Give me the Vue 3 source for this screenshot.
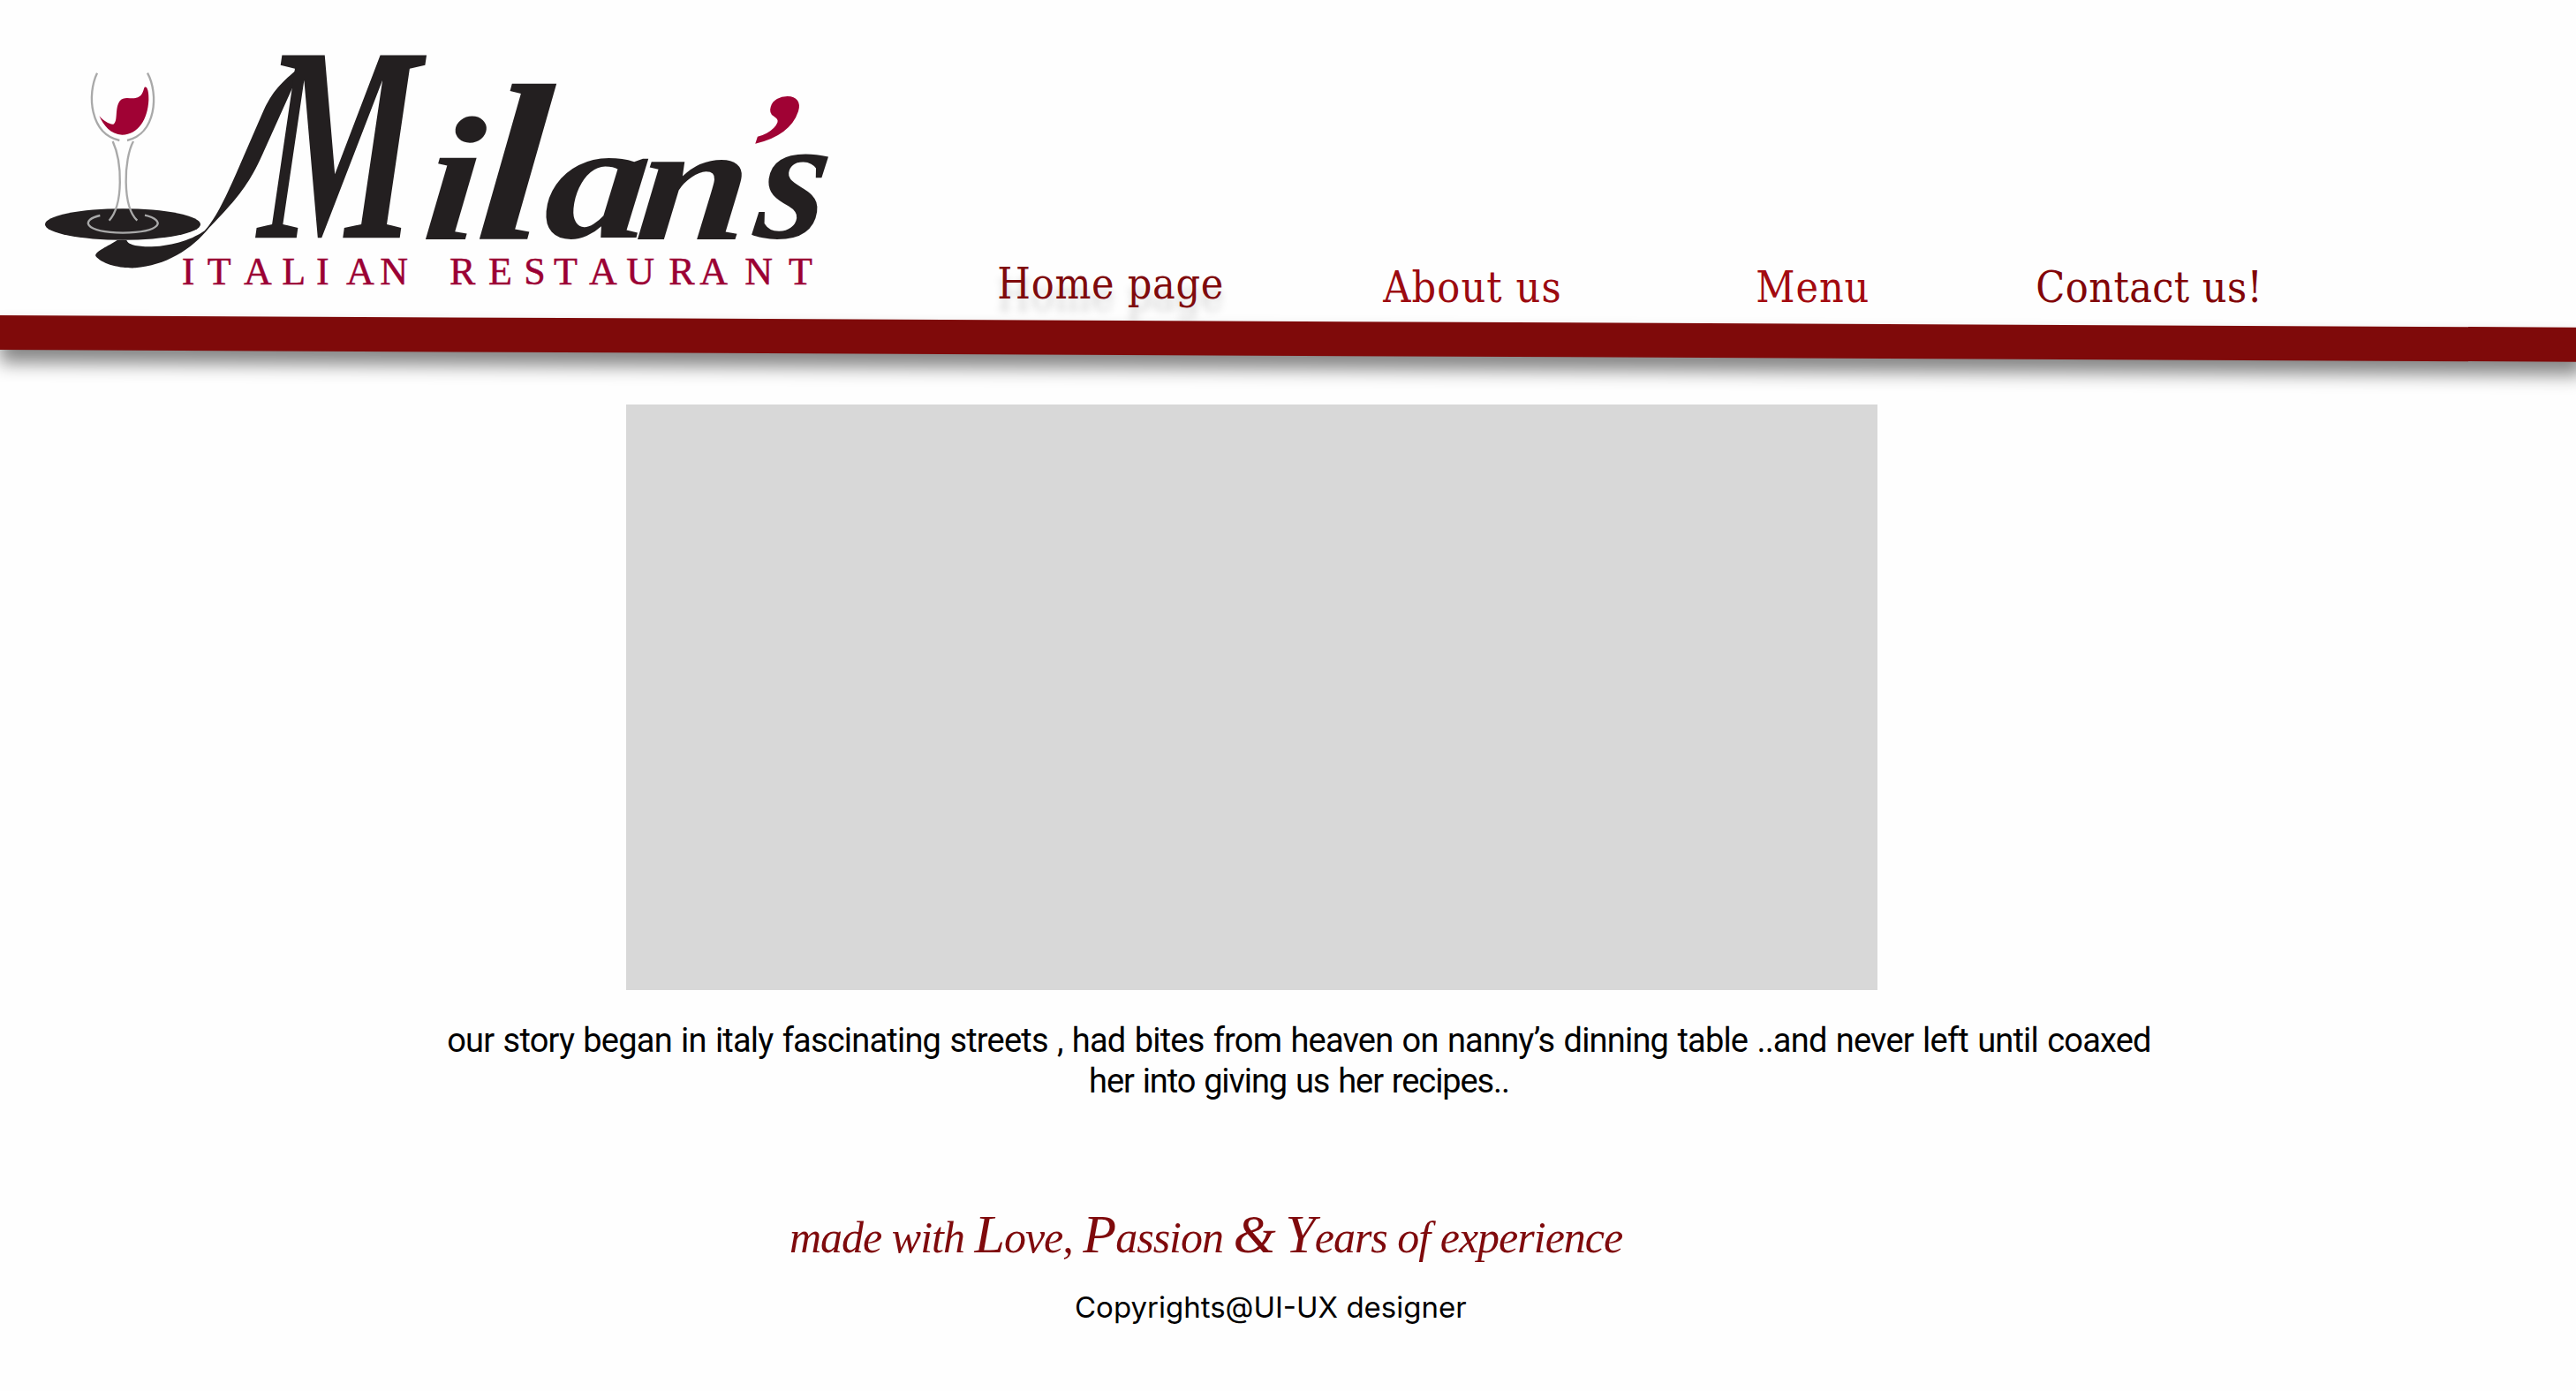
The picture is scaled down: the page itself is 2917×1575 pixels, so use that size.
<script setup>
const links = [
  { label: 'Home page', cls: 'home' },
  { label: 'About us', cls: 'about' },
  { label: 'Menu', cls: 'menu' },
  { label: 'Contact us!', cls: 'contact' },
]

// Hand-fitted letters of the wordmark: left edge, baseline, horizontal and vertical stretch, slant
const letters = [
  { ch: 'M', x: 785, y: 688, sx: 1.03, sy: 1.62, skew: -2 },
  { ch: 'i', x: 1338, y: 692, sx: 1.2, sy: 1.03, skew: -5 },
  { ch: 'l', x: 1520, y: 692, sx: 1.45, sy: 1.3, skew: -5 },
  { ch: 'a', x: 1750, y: 688, sx: 1.22, sy: 0.98, skew: -5 },
  { ch: 'n', x: 2062, y: 692, sx: 1.18, sy: 0.98, skew: -5 },
  { ch: '’', x: 2350, y: 561, sx: 1, sy: 0.91, skew: -18, cls: 'red' },
  { ch: 's', x: 2465, y: 688, sx: 1.05, sy: 1.03, skew: -8 },
]
const place = (l) => `translate(${l.x} ${l.y}) skewX(${l.skew}) scale(${l.sx} ${l.sy})`

const subtitle = 'ITALIAN RESTAURANT'
const subtitleX = '527 614 738 868 984 1086 1201 1330 1437 1569 1690 1791 1911 2038 2182 2287 2440 2589'
</script>

<template>
  <div class="page">
    <header class="top">
      <svg class="logo" viewBox="0 0 2800 1020" width="933.33" height="340" role="img" aria-label="Milan’s Italian Restaurant">
        <g transform="translate(0 120)">
          <g fill="#231f20">
            <ellipse cx="327" cy="642" rx="264" ry="53.500" />
            <path d="M308 696H340C346 714 385 718 425 718C500 716 570 690 605 664C650 615 690 520 725 440L800 268C835 185 870 158 925 110C945 94 965 82 985 76C1000 100 985 118 955 117C930 122 915 150 905 175L800 408C750 520 700 570 622 652C560 730 470 782 370 790C310 792 255 775 235 750C230 735 275 718 308 696Z" />
          </g>
          <path fill="#a00234" d="M401 176C411 172 416 192 415 220C412 285 380 338 325 338C285 337 262 306 247 274C262 290 280 303 295 302C312 292 299 250 316 224C330 206 350 216 370 213C395 208 395 190 401 176Z" />
          <g fill="none" stroke="#a9a9a9" stroke-width="7">
            <path d="M240 128C205 200 215 335 316 357" />
            <path d="M411 128C450 200 440 335 342 357" />
            <path d="M293 360C325 430 330 575 281 629" />
            <path d="M363 360C330 420 325 580 376 629" />
            <path d="M250 612C185 626 190 668 327 671C462 668 475 628 402 611" />
          </g>
          <g class="word">
            <text v-for="l in letters" :key="l.ch" :transform="place(l)" :class="l.cls">{{ l.ch }}</text>
          </g>
          <text class="sub" y="847" :x="subtitleX">{{ subtitle }}</text>
        </g>
      </svg>
      <nav class="nav">
        <a v-for="l in links" :key="l.label" :class="l.cls">{{ l.label }}</a>
      </nav>
    </header>
    <div class="bar"></div>
    <main class="main">
      <div class="picture"></div>
      <p class="story">
        our story began in italy fascinating streets , had bites from heaven on nanny’s dinning table ..and never left until coaxed<br />
        <span class="tight">her into giving us her recipes..</span>
      </p>
    </main>
    <footer class="foot">
      <p class="tagline">made with <b>L</b>ove, <b>P</b>assion <b>&amp;</b> <b>Y</b>ears of experience</p>
      <p class="copy">Copyrights@UI-UX designer</p>
    </footer>
  </div>
</template>

<style>
body {
  margin: 0;
  background: #fefefe;
}
</style>

<style scoped>
.page {
  width: 2917px;
  height: 1575px;
  overflow: hidden;
  background: #fefefe;
}

.top {
  display: flex;
  height: 357px;
}

.logo {
  flex: none;
  display: block;
  margin-left: 30px;
  overflow: visible;
}

.word text {
  font: italic bold 585px "Liberation Serif", serif;
  fill: #231f20;
}

.word .red {
  fill: #a00234;
}

.sub {
  font: 132px "Liberation Serif", serif;
  fill: #9b0034;
  stroke: #9b0034;
  stroke-width: 1.5;
}

.nav {
  display: flex;
  align-items: flex-start;
  margin-left: 166px;
  padding-top: 296.700px;
  font: 48px/56px "DejaVu Serif Condensed", "DejaVu Serif", serif;
  font-stretch: condensed;
  white-space: nowrap;
}

.home {
  width: 437px;
  margin-top: -3.700px;
  letter-spacing: 0.7px;
  color: #7f0a0c;
  text-shadow: 0 14px 8px rgba(0, 0, 0, 0.17);
}

.about {
  width: 422px;
  letter-spacing: 1.1px;
  color: #9c0a10;
}

.menu {
  width: 317px;
  letter-spacing: 0.9px;
  color: #a30a10;
}

.contact {
  letter-spacing: 0.4px;
  color: #820508;
}

.bar {
  width: 2925px;
  height: 39px;
  background: #7f0a0a;
  box-shadow: 0 15px 20px rgba(0, 0, 0, 0.47);
  transform: skewY(0.269deg);
  transform-origin: 0 0;
}

.main {
  padding-top: 62px;
}

.picture {
  width: 1417px;
  height: 663px;
  margin-left: 708.500px;
  background: #d8d8d8;
}

.story {
  width: 1960px;
  margin: 34.300px 0 0 491px;
  font: 38px/46px Roboto, sans-serif;
  letter-spacing: -0.8px;
  word-spacing: 1.6px;
  text-align: center;
  white-space: nowrap;
  color: #000;
}

.tight {
  letter-spacing: -1.1px;
}

.foot {
  padding-top: 123.300px;
}

.tagline {
  height: 60px;
  margin: 0 0 0 894px;
  font: italic 50px/60px "Liberation Serif", serif;
  letter-spacing: -1px;
  white-space: nowrap;
  color: #7f0a0c;
}

.tagline b {
  font-weight: normal;
  font-size: 62px;
  line-height: 1px;
}

.copy {
  margin: 29.100px 0 0 1217px;
  font: 33px/40px Inter, sans-serif;
  color: #000;
}
</style>
